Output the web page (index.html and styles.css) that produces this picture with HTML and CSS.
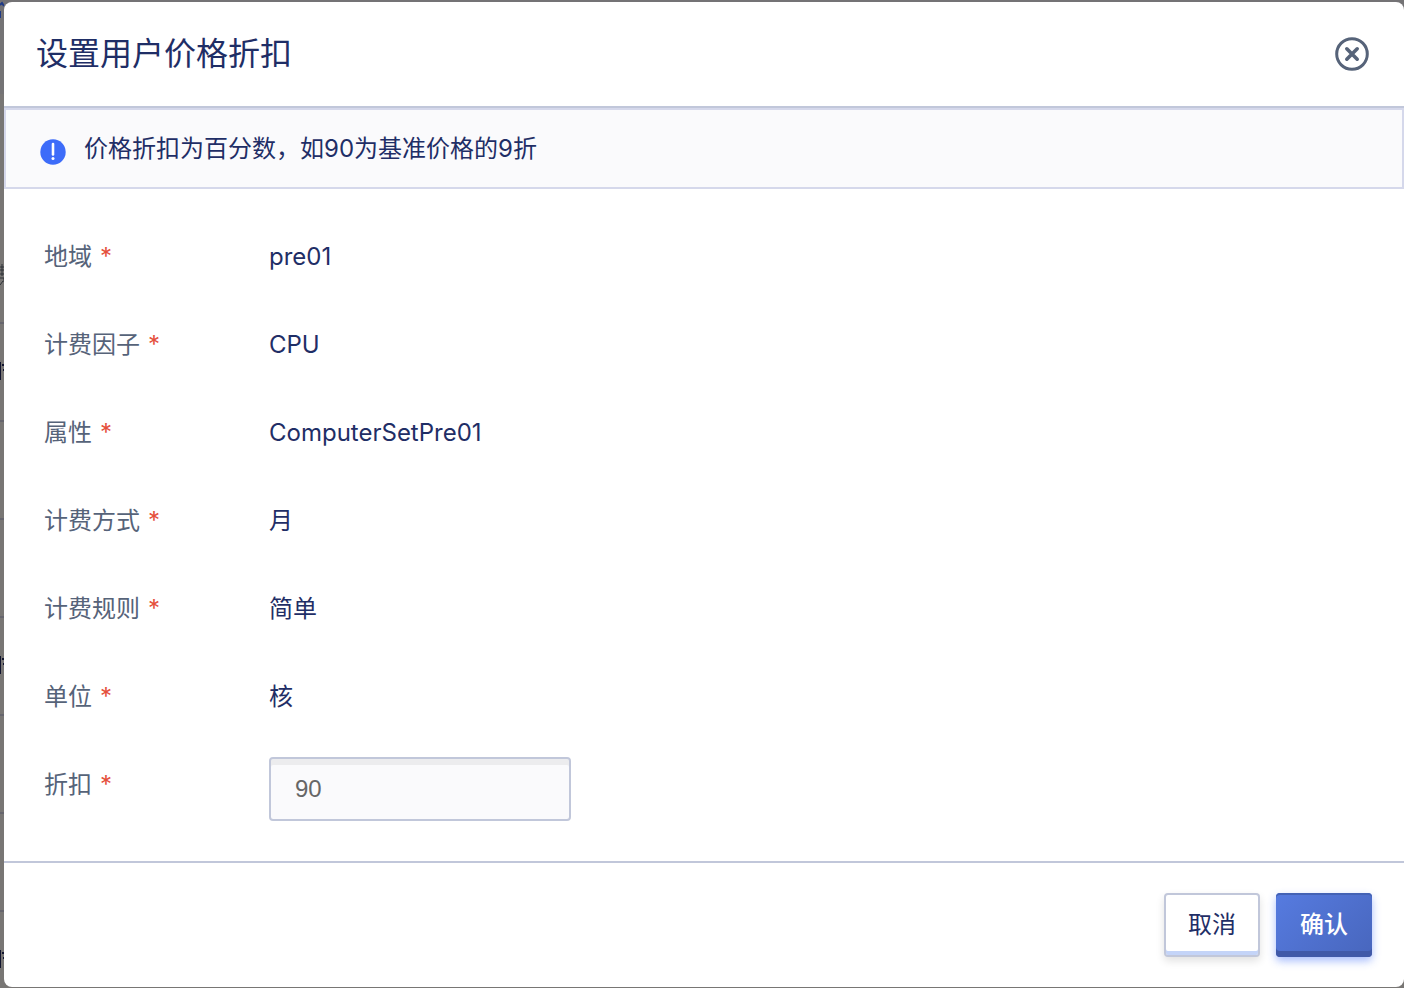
FILE: index.html
```html
<!DOCTYPE html>
<html lang="zh-CN">
<head>
<meta charset="utf-8">
<title>设置用户价格折扣</title>
<link rel="stylesheet" href="styles.css">
</head>
<body>
<div class="backdrop" aria-hidden="true">
  <div class="backdrop-top"></div>
  <svg class="backdrop-marks" width="4" height="988" viewBox="0 0 4 988">
    <path d="M0 5 2 3 4 6M0 11V18" fill="none" stroke="#1f3a86" stroke-width="2"/>
    <path d="M0 323H4M0 421H4M0 519H4M0 617H4M0 715H4M0 813H4M0 911H4" stroke="#66656d" stroke-width="2"/>
    <path d="M0 267H4M0 270H4M0 274H4M2 264V276M0 278H4V282M0 285 3 281" fill="none" stroke="#2c3036" stroke-width="1"/>
    <path d="M0 362H1V380H0ZM2 364H4V366H2ZM3 369H4V371H3ZM0 656H1V674H0ZM2 658H4V660H2ZM3 663H4V665H3ZM0 950H1V968H0ZM2 952H4V954H2ZM3 957H4V959H3Z" fill="#11142e"/>
  </svg>
</div>
<section class="modal" role="dialog" aria-modal="true" aria-labelledby="title">
  <header class="modal-header">
    <h1 class="modal-title" id="title">设置用户价格折扣</h1>
    <button class="close" type="button" aria-label="关闭">
      <svg width="34" height="34" viewBox="0 0 34 34" fill="none" stroke="#566379">
        <circle cx="17" cy="17" r="15.300" stroke-width="3"/>
        <path d="M11.800 11.800 22.200 22.200M22.200 11.800 11.800 22.200" stroke-width="3.600" stroke-linecap="round"/>
      </svg>
    </button>
  </header>
  <div class="notice">
    <svg class="notice-icon" width="26" height="26" viewBox="0 0 26 26">
      <circle cx="13" cy="13" r="12.700" fill="#3d6cf9"/>
      <path d="M13 5V15.500" stroke="#fff" stroke-width="2.600" stroke-linecap="round"/>
      <circle cx="13" cy="19.500" r="1.500" fill="#fff"/>
    </svg>
    <p class="notice-text">价格折扣为百分数，如90为基准价格的9折</p>
  </div>
  <form class="form" id="discount-form">
    <dl class="fields">
      <div class="row"><dt class="label">地域<span class="required">*</span></dt><dd class="value">pre01</dd></div>
      <div class="row"><dt class="label">计费因子<span class="required">*</span></dt><dd class="value">CPU</dd></div>
      <div class="row"><dt class="label">属性<span class="required">*</span></dt><dd class="value">ComputerSetPre01</dd></div>
      <div class="row"><dt class="label">计费方式<span class="required">*</span></dt><dd class="value">月</dd></div>
      <div class="row"><dt class="label">计费规则<span class="required">*</span></dt><dd class="value">简单</dd></div>
      <div class="row"><dt class="label">单位<span class="required">*</span></dt><dd class="value">核</dd></div>
    </dl>
    <div class="row">
      <label class="label" for="discount">折扣<span class="required">*</span></label>
      <input class="input" id="discount" type="text" inputmode="numeric" value="90" required>
    </div>
  </form>
  <footer class="modal-footer">
    <button class="button button-cancel" type="button">取消</button>
    <button class="button button-confirm" type="submit" form="discount-form">确认</button>
  </footer>
</section>
</body>
</html>
```
FILE: styles.css
```css
* { box-sizing: border-box; }

body {
  margin: 0;
  padding: 2px 0 1px 4px;
  background: #787674;
  color: #1f2e66;
  font-family: Inter, "Noto Sans CJK SC", sans-serif;
  font-size: 24px;
  line-height: 32px;
}

.backdrop {
  position: absolute;
  inset: 0;
  z-index: -1;
  overflow: hidden;
}

.backdrop-top {
  height: 94px;
  background: #747375;
}

.backdrop-marks {
  position: absolute;
  top: 0;
  left: 0;
}

.modal {
  overflow: hidden;
  border-radius: 8px;
  background: #fff;
}

.modal-header {
  display: flex;
  align-items: center;
  justify-content: space-between;
  padding: 28px 35px 28px 32px;
  border-bottom: 2px solid #c1c7da;
}

.modal-title {
  margin: 0;
  font-size: 32px;
  font-weight: 400;
  line-height: 48px;
}

.close {
  display: flex;
  padding: 0;
  border: 0;
  background: none;
  cursor: pointer;
}

.notice {
  display: flex;
  align-items: flex-start;
  gap: 18px;
  padding: 23px 34px 22px;
  border: 2px solid #d5d8eb;
  background: #fafafc;
}

.notice-icon {
  flex: none;
  margin-top: 6px;
}

.notice-text { margin: 0; }

.form {
  display: flex;
  flex-direction: column;
  gap: 24px;
  padding: 40px;
}

.fields {
  display: flex;
  flex-direction: column;
  gap: 24px;
  margin: 0;
}

.row {
  display: flex;
  min-height: 64px;
}

.label {
  flex: none;
  width: 225px;
  color: #566379;
  line-height: 56px;
}

.required {
  margin-left: 8px;
  color: #e5503c;
}

.value {
  margin: 0;
  line-height: 56px;
}

.input {
  width: 302px;
  height: 64px;
  padding: 0 24px;
  border: 2px solid #c1c7da;
  border-radius: 4px;
  background: #fafafc;
  box-shadow: inset 0 6px #ececee;
  color: #666;
  font-family: "Liberation Sans", Arial, sans-serif;
  font-size: 24px;
}

.modal-footer {
  display: flex;
  justify-content: flex-end;
  gap: 16px;
  padding: 30px 32px;
  border-top: 2px solid #c1c7da;
}

.button {
  height: 64px;
  padding: 0 22px;
  border: 2px solid #c1c7da;
  border-radius: 4px;
  font: inherit;
  cursor: pointer;
}

.button-cancel {
  background: #fff;
  box-shadow: inset 0 -4px #c4d4f8, 0 4px 8px rgba(0, 0, 0, 0.12);
  color: #1f2e66;
}

.button-confirm {
  border: 0;
  padding: 0 24px;
  background: linear-gradient(135deg, #567be0, #4866bd);
  box-shadow: inset 0 2px #4362b5, inset 0 -6px #4059a8, 0 4px 8px rgba(61, 108, 249, 0.45);
  color: #fff;
  font-weight: 500;
}
```
